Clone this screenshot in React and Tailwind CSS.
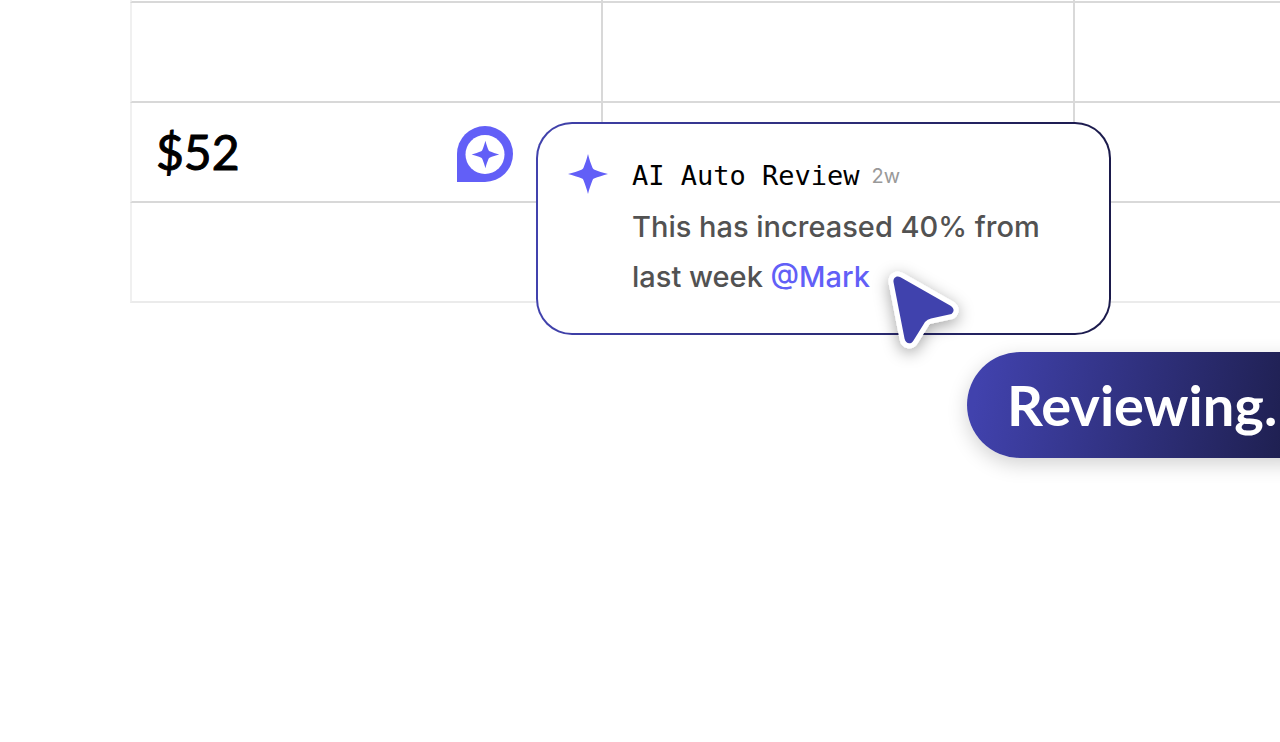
const STAR =
  "M20 0C21.200 5 23 10 24.600 14Q25 15 26 15.400C30 17 35 18.800 40 20C35 21.200 30 23 26 24.600Q25 25 24.600 26C23 30 21.200 35 20 40C18.800 35 17 30 15.400 26Q15 25 14 24.600C10 23 5 21.200 0 20C5 18.800 10 17 14 15.400Q15 15 15.400 14C17 10 18.800 5 20 0Z";

function Sparkle({ className }) {
  return (
    <svg viewBox="0 0 40 40" className={className} fill="#625ff7" aria-hidden="true">
      <path d={STAR} />
    </svg>
  );
}

function CommentBadge() {
  return (
    <svg viewBox="0 0 56 56" className="size-14" aria-hidden="true">
      <path d="M0 28A28 28 0 1 1 28 56H0Z" fill="#625ff7" />
      <circle cx="28" cy="28.500" r="19.500" fill="#fff" />
      <path d={STAR} fill="#625ff7" transform="translate(14.600 14.700) scale(.69)" />
    </svg>
  );
}

function Pointer() {
  return (
    <svg viewBox="0 0 100 110" className="h-[110px] w-[100px] overflow-visible" aria-hidden="true">
      <defs>
        <filter id="pointer-shadow" x="-50%" y="-50%" width="200%" height="200%">
          <feDropShadow dx="0" dy="4" stdDeviation="8" floodColor="#000" floodOpacity=".36" />
        </filter>
      </defs>
      <path
        d="M30.500 27.300L81 56Q86 60 81.500 64L61 68.500Q57.500 69 55 72L43.500 90.500C41 95 35.500 94 34.500 88.500L23.500 32C23 28 26.500 25 30.500 27.300Z"
        fill="#4142ad"
        stroke="#fff"
        strokeWidth="10"
        strokeLinejoin="round"
        style={{ paintOrder: "stroke" }}
        filter="url(#pointer-shadow)"
      />
    </svg>
  );
}

const rows = [
  ["", "", ""],
  ["", "", ""],
  ["$52", "", ""],
  ["", "", ""],
];

function Sheet() {
  return (
    <table className="-mt-[97px] ml-[130px] w-[1418px] table-fixed border-separate border-spacing-0">
      <tbody>
        {rows.map((row, r) => (
          <tr key={r} className="group h-[100px]">
            {row.map((value, c) => (
              <td
                key={c}
                className="border-r-2 border-b-2 border-black/15 p-0 group-last:border-b-black/8 first:border-l-2 first:border-l-black/6"
              >
                {value && (
                  <div className="flex items-center justify-between pt-1 pr-[88px] pl-6 font-['Lato',sans-serif] text-5xl text-black">
                    <span className="pb-1 [-webkit-text-stroke:1px_black]">{value}</span>
                    <button type="button" aria-label="Open comment">
                      <CommentBadge />
                    </button>
                  </div>
                )}
              </td>
            ))}
          </tr>
        ))}
      </tbody>
    </table>
  );
}

function ReviewCard() {
  return (
    <article className="absolute top-[122px] left-[536px] w-[575px] rounded-[36px] bg-linear-to-r from-[#4142ad] to-[#1b1a4b] p-[2px]">
      <div className="flex gap-6 rounded-[34px] bg-white px-[30px] pt-[30px] pb-[31px]">
        <Sparkle className="size-10 shrink-0" />
        <div>
          <header className="flex h-12 items-center gap-3 pb-1">
            <h2 className="font-['DejaVu_Sans_Mono',monospace] text-[27px] text-black">AI Auto Review</h2>
            <time className="font-['Inter',sans-serif] text-xl text-[#999]">2w</time>
          </header>
          <p className="font-['Inter',sans-serif] text-[29px] leading-[50px] font-medium text-[#525252]">
            This has increased 40% from
            <br />
            last week{" "}
            <a href="#mark" className="text-[#625ff7]">
              @Mark
            </a>
          </p>
        </div>
      </div>
    </article>
  );
}

export default function App() {
  return (
    <main className="relative flow-root h-screen overflow-hidden bg-white">
      <Sheet />
      <ReviewCard />
      <div
        role="status"
        className="absolute top-[352px] left-[967px] flex h-[106px] w-[380px] items-center rounded-full bg-[linear-gradient(100deg,#4142ad_4%,#1d1e4c_88%)] pl-10 font-['Lato',sans-serif] text-[56px] font-bold text-white shadow-[0_6px_20px_rgba(0,0,0,0.18)]"
      >
        Reviewing.
      </div>
      <div className="absolute top-[250px] left-[870px]">
        <Pointer />
      </div>
    </main>
  );
}
